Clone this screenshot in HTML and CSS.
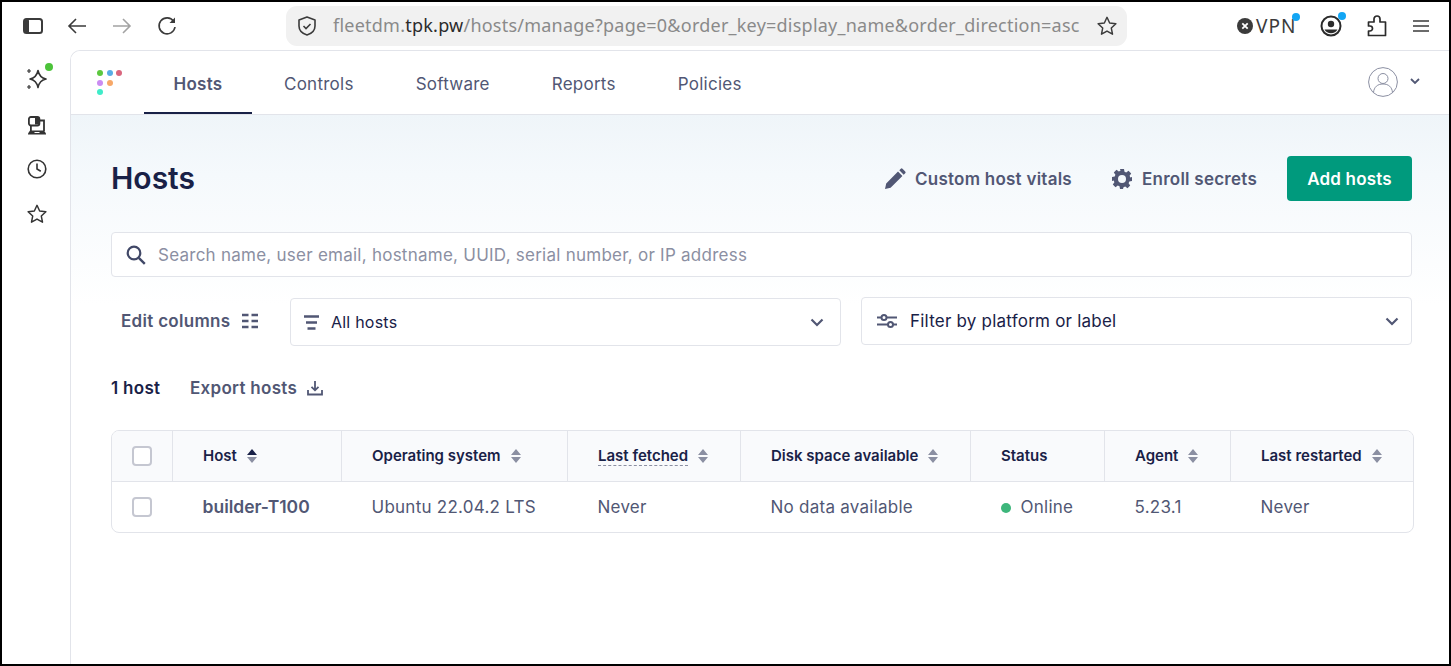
FILE: index.html
```html
<!DOCTYPE html>
<html lang="en">

<head>
    <meta charset="UTF-8">
    <meta name="viewport" content="width=device-width, initial-scale=1.0">
    <title>Manage hosts</title>
    <link rel="stylesheet" href="styles.css">
</head>

<body>
    <div class="window">
        <!-- browser toolbar -->
        <header class="toolbar">
            <div class="toolbar-left">
                <svg class="tb-icon sidebar-toggle" width="20" height="16" viewBox="0 0 20 16"><rect x="1" y="1" width="18" height="14" rx="2.5" fill="none" stroke="#3b3b3b" stroke-width="2"/><rect x="1" y="1" width="5" height="14" rx="1.5" fill="#3b3b3b"/></svg>
                <svg class="tb-icon back" width="20" height="18" viewBox="0 0 20 18"><path d="M19 9H2M9 2 2 9l7 7" fill="none" stroke="#3b3b3b" stroke-width="1.6"/></svg>
                <svg class="tb-icon forward" width="20" height="18" viewBox="0 0 20 18"><path d="M1 9h17M11 2l7 7-7 7" fill="none" stroke="#a3a3a3" stroke-width="1.6"/></svg>
                <svg class="tb-icon reload" width="20" height="20" viewBox="0 0 20 20"><path d="M16.6 5.2A8 8 0 1 0 18 11" fill="none" stroke="#3b3b3b" stroke-width="1.6"/><path d="M18 1.5V7h-5.5z" fill="#3b3b3b"/></svg>
            </div>
            <div class="urlbar">
                <svg class="shield" width="20" height="22" viewBox="0 0 20 22"><path d="M10 2l8 3v6c0 4.5-3.4 7.6-8 9-4.600-1.400-8-4.500-8-9V5z" fill="none" stroke="#3b3b3b" stroke-width="1.6" stroke-linejoin="round"/><path d="M6.5 11L9 13.500l4.500-4.500" fill="none" stroke="#3b3b3b" stroke-width="1.6"/></svg>
                <span class="url"><span class="url-dim">fleetdm.</span>tpk.pw<span class="url-dim">/hosts/manage?page=0&amp;order_key=display_name&amp;order_direction=asc</span></span>
                <svg class="url-star" width="22" height="22" viewBox="0 0 24 24"><path d="M12 2.5l2.900 6.200 6.800.8-5 4.700 1.300 6.700-6-3.400-6 3.400 1.300-6.700-5-4.700 6.800-.8z" fill="none" stroke="#3b3b3b" stroke-width="1.6" stroke-linejoin="round"/></svg>
            </div>
            <div class="toolbar-right">
                <div class="vpn">
                    <svg width="16" height="16" viewBox="0 0 16 16"><circle cx="8" cy="8" r="8" fill="#3b3b3b"/><path d="M5.3 5.3l5.400 5.400M10.700 5.300l-5.400 5.400" stroke="#fff" stroke-width="1.8"/></svg>
                    <span class="vpn-label">VPN</span>
                    <i class="blue-dot vpn-dot"></i>
                </div>
                <div class="profile">
                    <svg width="22" height="22" viewBox="0 0 22 22"><circle cx="11" cy="11" r="9.5" fill="none" stroke="#2b2b2b" stroke-width="2"/><circle cx="11" cy="9" r="3.2" fill="#2b2b2b"/><path d="M4.5 14.500h13a7.500 7.500 0 0 1-13 0z" fill="#2b2b2b"/></svg>
                    <i class="blue-dot profile-dot"></i>
                </div>
                <svg class="puzzle" width="20" height="22" viewBox="0 0 20 22"><path d="M1.5 20.5V16H3a2.500 2.500 0 0 0 0-5H1.500V7H7V4a3 3 0 0 1 6 0v3h5.500v13.500z" fill="none" stroke="#2b2b2b" stroke-width="1.7" stroke-linejoin="round"/></svg>
                <svg class="menu" width="16" height="14" viewBox="0 0 16 14"><path d="M0 2h16M0 7h16M0 12h16" stroke="#3b3b3b" stroke-width="1.5"/></svg>
            </div>
        </header>

        <div class="browser-body">
            <!-- browser side panel -->
            <aside class="side">
                <div class="side-item ai">
                    <svg width="22" height="22" viewBox="0 0 22 22"><path d="M12 2.500c1 5 3 7.500 8 8.500-5 1-7 3.500-8 8.500-1-5-3-7.500-8-8.500 5-1 7-3.500 8-8.500z" fill="none" stroke="#333" stroke-width="1.6" stroke-linejoin="round"/><path d="M3 1v4M1 3h4M3 17v4M1 19h4" stroke="#333" stroke-width="1.2"/></svg>
                    <i class="green-dot"></i>
                </div>
                <div class="side-item laptop">
                    <svg width="20" height="20" viewBox="0 0 20 20"><rect x="1.900" y="1" width="10.500" height="8.500" rx="2" fill="none" stroke="#333" stroke-width="1.8"/><rect x="8" y="2" width="4" height="6.500" fill="#333"/><path d="M3.900 10v5M12.500 4.500h4.500v10.500" fill="none" stroke="#333" stroke-width="1.8"/><path d="M3 14.500h14l2 3v1H1v-1z" fill="#333"/><path d="M7.500 16h5v1h-5z" fill="#fff"/></svg>
                </div>
                <div class="side-item">
                    <svg width="20" height="20" viewBox="0 0 20 20"><circle cx="10" cy="10" r="8.800" fill="none" stroke="#333" stroke-width="1.6"/><path d="M10 4.500V10l3.800 2.200" fill="none" stroke="#333" stroke-width="1.6"/></svg>
                </div>
                <div class="side-item">
                    <svg width="22" height="22" viewBox="0 0 24 24"><path d="M12 2.500l2.900 6.200 6.800.8-5 4.700 1.300 6.700-6-3.400-6 3.400 1.300-6.700-5-4.700 6.800-.8z" fill="none" stroke="#333" stroke-width="1.6" stroke-linejoin="round"/></svg>
                </div>
            </aside>

            <div class="app">
                <nav class="nav">
                    <div class="logo">
                        <i class="dot d-green"></i><i class="dot d-blue"></i><i class="dot d-red"></i>
                        <i class="dot d-purple"></i><i class="dot d-orange"></i><i class="dot d-none"></i>
                        <i class="dot d-teal"></i>
                    </div>
                    <ul class="tabs">
                        <li class="tab active">Hosts</li>
                        <li class="tab">Controls</li>
                        <li class="tab">Software</li>
                        <li class="tab">Reports</li>
                        <li class="tab">Policies</li>
                    </ul>
                    <div class="user">
                        <svg width="30" height="30" viewBox="0 0 30 30"><circle cx="15" cy="15" r="14.4" fill="none" stroke="#8b8fa2" stroke-width="1"/><circle cx="15" cy="11.5" r="5" fill="none" stroke="#8b8fa2" stroke-width="1"/><path d="M5.500 25.500c.5-5.500 4-8.500 9.500-8.500s9 3 9.500 8.500" fill="none" stroke="#8b8fa2" stroke-width="1"/></svg>
                        <svg class="user-caret" width="10" height="7" viewBox="0 0 10 7"><path d="M1 1l4 4 4-4" fill="none" stroke="#515774" stroke-width="1.8"/></svg>
                    </div>
                </nav>

                <main class="content">
                    <div class="page-head">
                        <h1>Hosts</h1>
                        <div class="head-actions">
                            <a class="action">
                                <svg width="22" height="22" viewBox="0 0 22 22"><path d="M1 21l1.200-5.600L14 3.600l4.400 4.400L6.600 19.800zM15.300 2.300l1.500-1.500a1.200 1.200 0 0 1 1.700 0l2.700 2.700a1.200 1.200 0 0 1 0 1.700l-1.500 1.500z" fill="#515774"/></svg>
                                Custom host vitals
                            </a>
                            <a class="action">
                                <svg width="20" height="20" viewBox="0 0 20 20"><path d="M8 0h4l.5 2.700 1.700.7 2.300-1.600 2.700 2.700-1.600 2.300.7 1.700L20 8v4l-2.700.5-.7 1.700 1.600 2.300-2.700 2.700-2.300-1.600-1.700.7L11 20H8l-.5-2.700-1.700-.7-2.300 1.600-2.700-2.700 1.600-2.300-.7-1.700L0 12V8l2.700-.5.700-1.700L1.800 3.500l2.700-2.700 2.300 1.600 1.700-.7z" fill="#515774"/><circle cx="10" cy="10" r="4" fill="#f4f8fb"/></svg>
                                Enroll secrets
                            </a>
                            <button class="add-btn">Add hosts</button>
                        </div>
                    </div>

                    <div class="search">
                        <svg width="20" height="20" viewBox="0 0 20 20"><circle cx="8" cy="8" r="6.3" fill="none" stroke="#414867" stroke-width="2.2"/><path d="M12.800 12.800l6 6" stroke="#414867" stroke-width="2.4"/></svg>
                        <span>Search name, user email, hostname, UUID, serial number, or IP address</span>
                    </div>

                    <div class="filters">
                        <a class="edit-cols">
                            Edit columns
                            <svg width="16" height="16" viewBox="0 0 16 16"><path d="M0 2h6.500M9.500 2H16M0 8h6.500M9.500 8H16M0 14h6.500M9.500 14H16" stroke="#515774" stroke-width="2.6"/></svg>
                        </a>
                        <div class="select select-hosts">
                            <svg width="15" height="15" viewBox="0 0 15 15"><path d="M0 1.500h15M2 7.500h11M3.500 13.500h8" stroke="#515774" stroke-width="2.5"/></svg>
                            <span class="select-text small">All hosts</span>
                            <svg class="chev" width="14" height="9" viewBox="0 0 14 9"><path d="M1.500 1.500 7 7l5.500-5.500" fill="none" stroke="#515774" stroke-width="2.2"/></svg>
                        </div>
                        <div class="select select-platform">
                            <svg width="20" height="14" viewBox="0 0 20 14"><path d="M0 3.500h20M0 10.500h20" stroke="#515774" stroke-width="2"/><circle cx="7" cy="3.500" r="2.500" fill="#fff" stroke="#515774" stroke-width="2"/><circle cx="13.500" cy="10.500" r="2.500" fill="#fff" stroke="#515774" stroke-width="2"/></svg>
                            <span class="select-text">Filter by platform or label</span>
                            <svg class="chev" width="14" height="9" viewBox="0 0 14 9"><path d="M1.500 1.500 7 7l5.500-5.500" fill="none" stroke="#515774" stroke-width="2.2"/></svg>
                        </div>
                    </div>

                    <div class="count-row">
                        <span class="count">1 host</span>
                        <a class="export">
                            Export hosts
                            <svg width="16" height="16" viewBox="0 0 16 16"><path d="M8 1v9M4.500 6.800 8 10.300l3.500-3.500M1 10v4.500h14V10" fill="none" stroke="#515774" stroke-width="1.8"/></svg>
                        </a>
                    </div>

                    <div class="table-wrap">
                        <table class="hosts">
                            <colgroup>
                                <col class="c-check"><col class="c-host"><col class="c-os"><col class="c-fetched"><col class="c-disk"><col class="c-status"><col class="c-agent"><col class="c-restart">
                            </colgroup>
                            <thead>
                                <tr>
                                    <th class="check-cell"><i class="checkbox"></i></th>
                                    <th>Host<svg class="sort" width="10" height="14" viewBox="0 0 10 14"><path d="M5 0l5 6H0z" fill="#192147"/><path d="M5 14l5-6H0z" fill="#8b8fa2"/></svg></th>
                                    <th>Operating system<svg class="sort" width="10" height="14" viewBox="0 0 10 14"><path d="M5 0l5 6H0zM5 14l5-6H0z" fill="#8b8fa2"/></svg></th>
                                    <th><span class="tip">Last fetched</span><svg class="sort" width="10" height="14" viewBox="0 0 10 14"><path d="M5 0l5 6H0zM5 14l5-6H0z" fill="#8b8fa2"/></svg></th>
                                    <th>Disk space available<svg class="sort" width="10" height="14" viewBox="0 0 10 14"><path d="M5 0l5 6H0zM5 14l5-6H0z" fill="#8b8fa2"/></svg></th>
                                    <th>Status</th>
                                    <th>Agent<svg class="sort" width="10" height="14" viewBox="0 0 10 14"><path d="M5 0l5 6H0zM5 14l5-6H0z" fill="#8b8fa2"/></svg></th>
                                    <th>Last restarted<svg class="sort" width="10" height="14" viewBox="0 0 10 14"><path d="M5 0l5 6H0zM5 14l5-6H0z" fill="#8b8fa2"/></svg></th>
                                </tr>
                            </thead>
                            <tbody>
                                <tr>
                                    <td class="check-cell"><i class="checkbox"></i></td>
                                    <td class="host-name">builder-T100</td>
                                    <td>Ubuntu 22.04.2 LTS</td>
                                    <td>Never</td>
                                    <td>No data available</td>
                                    <td><i class="online-dot"></i>Online</td>
                                    <td>5.23.1</td>
                                    <td>Never</td>
                                </tr>
                            </tbody>
                        </table>
                    </div>
                </main>
            </div>
        </div>
    </div>
</body>

</html>
```

FILE: styles.css
```css
/* General Reset */
* {
    margin: 0;
    padding: 0;
    box-sizing: border-box;
}

html,
body {
    height: 100%;
    overflow: hidden;
}

body {
    font-family: Inter, "Liberation Sans", sans-serif;
    background-color: #fff;
    color: #515774;
}

i {
    display: block;
}

.window {
    height: 666px;
    border: 2px solid #000;
    display: flex;
    flex-direction: column;
    background: #fff;
}

/* Browser toolbar */
.toolbar {
    height: 48px;
    flex: none;
    display: flex;
    align-items: center;
}

.toolbar-left {
    width: 284px;
    display: flex;
    align-items: center;
    flex: none;
    padding-left: 21px;
}

.back {
    margin-left: 24px;
}

.forward {
    margin-left: 25px;
}

.reload {
    margin-left: 25px;
}

.urlbar {
    width: 841px;
    height: 40px;
    flex: none;
    background: #f1f1f1;
    border-radius: 11px;
    display: flex;
    align-items: center;
    padding-left: 11px;
}

.url {
    margin-left: 16px;
    padding-bottom: 2px;
    font-family: "Noto Sans", sans-serif;
    font-size: 18px;
    letter-spacing: 0.23px;
    color: #2b2b2b;
    white-space: nowrap;
    width: 747px;
    overflow: hidden;
}

.url-dim {
    color: #8a8a8a;
}

.url-star {
    margin-left: 16px;
}

.toolbar-right {
    flex: 1;
    display: flex;
    align-items: center;
    padding-left: 110px;
}

.vpn {
    display: flex;
    align-items: center;
    gap: 3px;
    position: relative;
}

.vpn-label {
    font-family: "Noto Sans", sans-serif;
    font-size: 19px;
    letter-spacing: 1px;
    line-height: 22px;
    padding-bottom: 1px;
    color: #3b3b3b;
}

.blue-dot {
    width: 8px;
    height: 8px;
    border-radius: 50%;
    background: #12a5f4;
    position: absolute;
}

.vpn-dot {
    top: -2px;
    right: -4px;
}

.profile {
    position: relative;
    margin-left: 24px;
    height: 22px;
}

.profile-dot {
    top: -3px;
    right: -4px;
}

.puzzle {
    margin-left: 25px;
}

.menu {
    margin-left: 26px;
}

/* Side panel */
.browser-body {
    flex: 1;
    display: flex;
    min-height: 0;
}

.side {
    width: 68px;
    flex: none;
    display: flex;
    flex-direction: column;
    align-items: center;
    padding-top: 18px;
    padding-left: 2px;
}

.side-item {
    height: 22px;
    margin-bottom: 23px;
    display: flex;
    align-items: center;
    justify-content: center;
    position: relative;
}

.side-item.laptop {
    padding-top: 4px;
}

.green-dot {
    position: absolute;
    top: -5px;
    right: -5px;
    width: 8px;
    height: 8px;
    border-radius: 50%;
    background: #4cc33a;
}

/* App */
.app {
    flex: 1;
    min-width: 0;
    border-top: 1px solid #e2e4ea;
    border-left: 1px solid #e2e4ea;
    border-top-left-radius: 10px;
    display: flex;
    flex-direction: column;
    overflow: hidden;
}

.nav {
    height: 64px;
    flex: none;
    display: flex;
    align-items: stretch;
    border-bottom: 1px solid #e2e4ea;
    padding-left: 26px;
    padding-right: 29px;
    background: #fff;
}

.logo {
    width: 47px;
    display: grid;
    grid-template-columns: repeat(3, 6px);
    grid-auto-rows: 6px;
    gap: 3.5px;
    align-content: start;
    padding-top: 19px;
    flex: none;
}

.dot {
    width: 6px;
    height: 6px;
    border-radius: 50%;
}

.d-green { background: #5cc83f; }
.d-blue { background: #58ade6; }
.d-red { background: #d9667e; }
.d-purple { background: #ca8cf2; }
.d-orange { background: #f7a868; }
.d-teal { background: #3fecc9; }

.tabs {
    display: flex;
    list-style: none;
    flex: 1;
}

.tab {
    padding: 0 30px 0 32px;
    line-height: 66px;
    height: 64px;
    font-size: 17px;
    color: #515774;
    letter-spacing: 0.25px;
}

.tab.active {
    width: 108px;
    padding: 0;
    text-align: center;
    font-weight: 600;
    border-bottom: 2px solid #192147;
    height: 63px;
}

.user {
    display: flex;
    align-items: center;
    gap: 12px;
    padding-bottom: 2px;
}

/* Page content */
.content {
    flex: 1;
    padding: 41px 0 0 40px;
    background: linear-gradient(#eff5f9 0, #f5f9fc 60px, #fff 190px);
}

.page-head {
    width: 1301px;
    height: 45px;
    display: flex;
    align-items: center;
    justify-content: space-between;
}

h1 {
    font-size: 30px;
    font-weight: 600;
    color: #192147;
    padding-bottom: 2px;
}

.head-actions {
    display: flex;
    align-items: center;
}

.action {
    display: flex;
    align-items: center;
    gap: 9px;
    font-size: 17px;
    font-weight: 600;
    letter-spacing: 0.25px;
    color: #515774;
    margin-right: 40px;
}

.action:nth-child(2) {
    gap: 10px;
    margin-right: 30px;
}

.add-btn {
    width: 125px;
    height: 45px;
    border: none;
    border-radius: 4px;
    background: #009a7d;
    color: #fff;
    font-family: inherit;
    font-size: 17px;
    font-weight: 600;
    letter-spacing: 0.2px;
}

.search {
    width: 1301px;
    height: 45px;
    margin-top: 31px;
    border: 1px solid #e2e4ea;
    border-radius: 4px;
    background: #fff;
    display: flex;
    align-items: center;
    gap: 12px;
    padding-left: 14px;
    font-size: 17px;
    letter-spacing: 0.25px;
    color: #8b8fa2;
}

.filters {
    width: 1301px;
    margin-top: 20px;
    display: flex;
    align-items: flex-start;
}

.edit-cols {
    width: 179px;
    flex: none;
    height: 48px;
    display: flex;
    align-items: center;
    gap: 12px;
    padding-left: 10px;
    font-size: 17px;
    font-weight: 600;
    letter-spacing: 0.3px;
    color: #515774;
}

.select {
    height: 48px;
    border: 1px solid #e2e4ea;
    border-radius: 4px;
    background: #fff;
    display: flex;
    align-items: center;
    color: #192147;
    font-size: 17px;
    letter-spacing: 0.22px;
}

.select-hosts {
    width: 551px;
    margin-top: 1px;
    padding-left: 13px;
    gap: 12px;
}

.select-platform {
    width: 551px;
    margin-left: 20px;
    padding-left: 15px;
    gap: 13px;
}

.select-text {
    flex: 1;
}

.small {
    font-size: 16px;
}

.chev {
    margin-right: 16px;
}

.select-platform .chev {
    margin-right: 12px;
}

.count-row {
    display: flex;
    align-items: center;
    height: 24px;
    margin-top: 30px;
    font-size: 17px;
    font-weight: 600;
    letter-spacing: 0.3px;
}

.count {
    color: #192147;
    width: 79px;
}

.export {
    display: flex;
    align-items: center;
    gap: 10px;
    color: #515774;
}

/* Hosts table */
.table-wrap {
    width: 1303px;
    margin-top: 30px;
    border: 1px solid #e2e4ea;
    border-radius: 8px;
    overflow: hidden;
    background: #fff;
}

.hosts {
    width: 100%;
    table-layout: fixed;
    border-collapse: collapse;
}

.c-check { width: 60px; }
.c-host { width: 169px; }
.c-os { width: 226px; }
.c-fetched { width: 173px; }
.c-disk { width: 230px; }
.c-status { width: 134px; }
.c-agent { width: 126px; }

th {
    height: 50px;
    background: #f9fafc;
    border-bottom: 1px solid #e2e4ea;
    border-right: 1px solid #e2e4ea;
    padding-left: 30.5px;
    text-align: left;
    font-size: 15px;
    font-weight: 600;
    color: #192147;
    white-space: nowrap;
}

th:last-child {
    border-right: none;
}

td {
    height: 51px;
    padding-left: 30.5px;
    font-size: 17px;
    letter-spacing: 0.25px;
    color: #515774;
    white-space: nowrap;
}

th.check-cell,
td.check-cell {
    padding-left: 20px;
}

.checkbox {
    width: 20px;
    height: 20px;
    border: 2px solid #c5c7d1;
    border-radius: 4px;
    background: #fff;
}

.sort {
    margin-left: 10px;
    vertical-align: -2px;
}

.tip {
    border-bottom: 1px dashed #8b8fa2;
}

td.host-name {
    font-weight: 600;
    font-size: 17.5px;
    letter-spacing: 0;
}

.online-dot {
    display: inline-block;
    width: 10px;
    height: 10px;
    border-radius: 50%;
    background: #3db67b;
    margin-right: 10px;
}
```
